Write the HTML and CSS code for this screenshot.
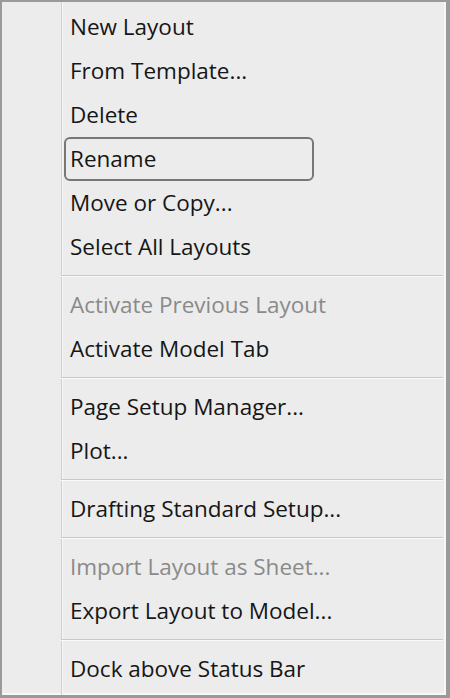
FILE: index.html
```html
<!DOCTYPE html>
<html lang="en">
<head>
    <meta charset="UTF-8">
    <meta name="viewport" content="width=device-width, initial-scale=1.0">
    <title>Layout Tab Menu</title>
    <link rel="stylesheet" href="styles.css">
</head>
<body>
    <div class="menu">
        <div class="gutter"></div>
        <ul class="items">
            <li class="item">New Layout</li>
            <li class="item">From Template...</li>
            <li class="item">Delete</li>
            <li class="item focused">Rename</li>
            <li class="item">Move or Copy...</li>
            <li class="item">Select All Layouts</li>
            <li class="separator"></li>
            <li class="item disabled">Activate Previous Layout</li>
            <li class="item">Activate Model Tab</li>
            <li class="separator"></li>
            <li class="item">Page Setup Manager...</li>
            <li class="item">Plot...</li>
            <li class="separator"></li>
            <li class="item">Drafting Standard Setup...</li>
            <li class="separator"></li>
            <li class="item disabled">Import Layout as Sheet...</li>
            <li class="item">Export Layout to Model...</li>
            <li class="separator"></li>
            <li class="item">Dock above Status Bar</li>
        </ul>
    </div>
</body>
</html>
```

FILE: styles.css
```css
html, body {
    margin: 0;
    padding: 0;
    background-color: #ececec;
}

body {
    font-family: 'Open Sans', 'Noto Sans', sans-serif;
    color: #161616;
}

.menu {
    display: flex;
    width: 450px;
    height: 698px;
    box-sizing: border-box;
    border: 2px solid #9a9a9a;
    border-right-width: 4px;
    border-bottom-width: 3px;
    background-color: #ececec;
    box-shadow: inset -2px -2px 0 #f7f7f7;
}

.gutter {
    width: 59px;
    flex-shrink: 0;
    border-right: 1px solid #cfcfcf;
    box-shadow: 1px 0 0 #f8f8f8;
}

.items {
    list-style: none;
    margin: 0;
    padding: 3px 3px 4px 1px;
    flex: 1;
}

.item {
    height: 44px;
    line-height: 44px;
    padding-left: 7px;
    font-size: 22.5px;
    white-space: nowrap;
    box-sizing: border-box;
}

.item.disabled {
    color: #8a8a8a;
}

/* keyboard focus frame */
.item.focused {
    width: 250px;
    margin-left: 1px;
    padding-left: 4px;
    border: 2px solid #777;
    border-radius: 6px;
    line-height: 40px;
}

.separator {
    height: 14px;
    position: relative;
    margin-left: -2px;
}

.separator::after {
    content: "";
    position: absolute;
    left: 0;
    right: 0;
    top: 6px;
    height: 1px;
    background-color: #c9c9c9;
    box-shadow: 0 1px 0 #fafafa;
}
```
